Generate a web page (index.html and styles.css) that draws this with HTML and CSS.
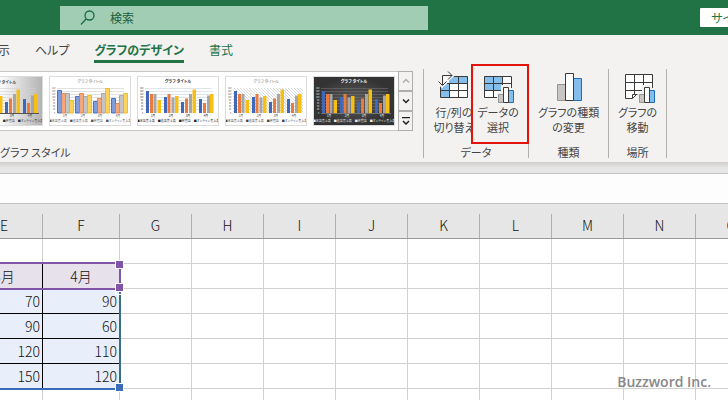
FILE: index.html
```
<!DOCTYPE html>
<html lang="ja">
<head>
  <meta charset="utf-8">
  <title>グラフのデザイン</title>
  <meta name="viewport" content="width=device-width, initial-scale=1.0">
  <link rel="stylesheet" href="styles.css">
</head>
<body>
<svg class="defs" aria-hidden="true">
  <defs>
    <linearGradient id="silver" x1="0" y1="0" x2="1" y2="0">
      <stop offset="0.5" stop-color="#fafafa"/>
      <stop offset="1" stop-color="#b4b4b4"/>
    </linearGradient>
    <radialGradient id="dark">
      <stop offset="0" stop-color="#5c5c5c"/>
      <stop offset="1" stop-color="#333333"/>
    </radialGradient>
    <pattern id="hatch" width="3" height="3" patternUnits="userSpaceOnUse">
      <path d="M0 0l3 3" stroke="#b9c0c0" stroke-width="0.6"/>
    </pattern>
    <symbol id="lines" viewBox="0 0 80 48">
      <path d="M7 11.5h67M7 14.5h67M7 17.5h67M7 20.5h67M7 23.5h67M7 26.5h67M7 29.5h67M7 32.5h67" stroke="currentColor" stroke-width="0.6"/>
    </symbol>
    <symbol id="bars" viewBox="0 0 80 48">
      <path fill="#4167b8" d="M8 14h3v22h-3zM26 20h3v16h-3zM43 25h3v11h-3zM61 22h3v14h-3z"/>
      <path fill="#e97c3c" d="M12 17h3v19h-3zM29.5 17h3v19h-3zM47 21.500h3v14.500h-3zM65 26h3v10h-3z"/>
      <path fill="#a6a6a6" d="M15.500 17h3v19h-3zM33.500 20.500h3v15.500h-3zM51 17h3v19h-3zM69 18.500h3v17.500h-3z"/>
      <path fill="#f8be14" d="M19.500 23h3.500v13h-3.500zM37 19h3.500v17h-3.500zM54.500 12.500h3.500v23.500h-3.500zM72 17h3.500v19h-3.500z"/>
    </symbol>
    <symbol id="texts" viewBox="0 0 80 48">
      <g fill="currentColor" font-size="2">
        <text x="2" y="12">160</text><text x="2" y="15">140</text><text x="2" y="18">120</text><text x="2" y="21">100</text>
        <text x="3" y="24">80</text><text x="3" y="27">60</text><text x="3" y="30">40</text><text x="3" y="33">20</text><text x="4" y="37">0</text>
      </g>
      <g fill="currentColor" font-size="3" text-anchor="middle">
        <text x="15" y="40">1月</text><text x="33" y="40">2月</text><text x="50" y="40">3月</text><text x="68" y="40">4月</text>
        <text x="40" y="45">■本店売上高　■支店売上高　■直営店　■オンライン売上高</text>
      </g>
    </symbol>
  </defs>
</svg>

<header class="titlebar">
  <label class="search">
    <svg width="16" height="16" viewBox="0 0 16 16" fill="none" stroke="#1b6b40" stroke-width="1.3"><circle cx="9.500" cy="5.500" r="4.500"/><path d="M6.300 8.700L1 14.500"/></svg>
    <input type="text" placeholder="検索" aria-label="検索">
  </label>
  <button class="signin">サインイン</button>
</header>

<nav class="tabs">
  <a href="#">表示</a>
  <a href="#">ヘルプ</a>
  <a href="#" class="active">グラフのデザイン</a>
  <a href="#" class="context">書式</a>
</nav>

<section class="ribbon">
  <div class="group styles">
    <div class="gallery">
      <div class="thumbs">
        <button class="thumb" aria-label="スタイル 1">
          <svg viewBox="0 0 80 48"><rect width="80" height="48" fill="url(#silver)"/>
            <use href="#lines" color="#d0d0d0"/><use href="#bars"/><path d="M7 36.500h70" stroke="#555"/><use href="#texts" color="#333"/>
            <text class="caption" x="41" y="7" fill="#444">グラフ タイトル</text></svg>
        </button>
        <button class="thumb" aria-label="スタイル 2">
          <svg viewBox="0 0 80 48"><rect width="80" height="48" fill="#fff"/>
            <use href="#lines" color="#cccccc"/>
            <g stroke-width="0.8">
              <path fill="#7d9edb" stroke="#2f5cb8" d="M7.500 13.500h4v22.500h-4zM25.500 19.500h4v16.500h-4zM43.500 24.500h4v11.500h-4zM61.500 21.500h4v14.500h-4z"/>
              <path fill="#f5a67b" stroke="#e5733b" d="M11.500 16.500h4v19.500h-4zM29.500 16.500h4v19.500h-4zM47.500 21.500h4v14.500h-4zM65.500 26.500h4v9.500h-4z"/>
              <path fill="#c4c4c4" stroke="#999" d="M15.500 16.500h4v19.500h-4zM33.500 19.500h4v16.500h-4zM51.500 16.500h4v19.500h-4zM69.500 18.500h4v17.500h-4z"/>
              <path fill="#fbd35b" stroke="#e8b410" d="M19.500 23.500h4v12.500h-4zM37.500 18.500h4v17.500h-4zM55.500 11.500h4v24.500h-4zM73.500 16.500h4v19.500h-4z"/>
            </g>
            <use href="#texts" color="#555"/>
            <text class="caption light" x="40" y="6" fill="#777">グラフ タイトル</text></svg>
        </button>
        <button class="thumb" aria-label="スタイル 3">
          <svg viewBox="0 0 80 48"><rect width="80" height="48" fill="#fff"/>
            <use href="#lines" color="#c9d3df"/><use href="#bars"/><use href="#texts" color="#222"/>
            <text class="caption" x="40" y="6" fill="#333">グラフ タイトル</text></svg>
        </button>
        <button class="thumb" aria-label="スタイル 4">
          <svg viewBox="0 0 80 48"><rect width="80" height="48" fill="#fff"/>
            <rect x="7" y="11" width="70" height="25" fill="url(#hatch)"/>
            <path d="M24.500 11v25M42 11v25M59.500 11v25" stroke="#ddd" stroke-width="0.6"/>
            <use href="#bars"/><use href="#texts" color="#444"/>
            <text class="caption light" x="40" y="6" fill="#777">グラフ タイトル</text></svg>
        </button>
        <button class="thumb" aria-label="スタイル 5">
          <svg viewBox="0 0 80 48"><rect width="80" height="48" fill="url(#dark)"/>
            <use href="#lines" color="#707070"/><use href="#bars"/><path d="M7 36.500h70" stroke="#999" stroke-width="0.6"/><use href="#texts" color="#eee"/>
            <text class="caption" x="40" y="6" fill="#fff">グラフ タイトル</text></svg>
        </button>
      </div>
      <div class="scroll">
        <button aria-label="上へ" disabled><svg width="8" height="8" viewBox="0 0 8 8"><path d="M1 5.500l3-3 3 3"/></svg></button>
        <button aria-label="下へ"><svg width="8" height="8" viewBox="0 0 8 8"><path d="M1 2.500l3 3 3-3"/></svg></button>
        <button aria-label="その他"><svg width="8" height="8" viewBox="0 0 8 8"><path d="M0 0.500h8M1 4l3 3 3-3"/></svg></button>
      </div>
    </div>
    <div class="group-name">グラフ スタイル</div>
  </div>

  <div class="group data">
    <div class="tools">
      <button class="tool">
        <svg class="icon" viewBox="0 0 32 32">
          <path fill="#fff" d="M2 5h28v21h-28z"/>
          <path fill="#83beec" d="M11 5h19v7h-19zM2 12h9v14h-9z"/>
          <path class="line" d="M2.500 12v14.500h27v-21H14M11.500 12v14M20.500 5v21M2 12.500h28M2 19.500h28"/>
          <path d="M4 14V4.500h10M1 11l3 3.500L8 11M10 1l4 3.500L10 8" fill="none" stroke="#f3f2f1" stroke-width="4"/>
          <path class="line" d="M4.500 14V4.500H14M0.500 10.500l4 4 4-4M10 0.500l4 4-4 4"/>
        </svg>
        <span>行/列の<br>切り替え</span>
      </button>
      <button class="tool marked">
        <svg class="icon" viewBox="0 0 32 32">
          <path fill="#fff" d="M2 5h28v21h-28z"/>
          <path fill="#83beec" d="M2 5h18v14h-18z"/>
          <path class="line" d="M2.500 5.500h27v21h-27zM11.500 5v21M20.500 5v21M2 12.500h28M2 19.500h28"/>
          <path fill="#f3f2f1" d="M15 21h4v-7h9v3h5v15h-18z"/>
          <path fill="#c8c6c4" stroke="#979593" d="M16.500 23.500h5v8h-5z"/>
          <path fill="#83beec" stroke="#1e6fb8" d="M26.500 19.500h5v12h-5z"/>
          <path fill="#fff" stroke="#3b3a39" d="M21.500 16.500h5v15h-5z"/>
        </svg>
        <span>データの<br>選択</span>
      </button>
    </div>
    <div class="group-name">データ</div>
  </div>

  <div class="group kind">
    <div class="tools">
      <button class="tool">
        <svg class="icon" viewBox="0 0 32 32">
          <path fill="#c8c6c4" stroke="#979593" d="M4.500 13.500h8v16h-8z"/>
          <path fill="#83beec" stroke="#1e6fb8" d="M20.500 7.500h8v22h-8z"/>
          <path fill="#fff" stroke="#3b3a39" d="M12.500 2.500h8v27h-8z"/>
        </svg>
        <span>グラフの種類<br>の変更</span>
      </button>
    </div>
    <div class="group-name">種類</div>
  </div>

  <div class="group place">
    <div class="tools">
      <button class="tool">
        <svg class="icon" viewBox="0 0 32 32">
          <path fill="#fff" d="M3 3h28v20h-16l-4 4h-8z"/>
          <path class="line" d="M30.500 17V3.500h-27v24h7l4-4M12.500 3v20M21.500 3v12M3 11.500h28M3 19.500h18M10.500 27v-3.500h5"/>
          <path fill="#f3f2f1" d="M16 21h4v-7h9v3h4v15h-17z"/>
          <path fill="#c8c6c4" stroke="#979593" d="M17.500 23.500h5v8h-5z"/>
          <path fill="#83beec" stroke="#1e6fb8" d="M27.500 19.500h5v12h-5z"/>
          <path fill="#fff" stroke="#3b3a39" d="M22.500 16.500h5v15h-5z"/>
        </svg>
        <span>グラフの<br>移動</span>
      </button>
    </div>
    <div class="group-name">場所</div>
  </div>
</section>

<div class="formula"><input type="text" aria-label="数式バー"></div>

<main class="sheet">
  <table>
    <colgroup><col class="wide" span="2"><col span="9"></colgroup>
    <thead>
      <tr><th><span>E</span></th><th><span>F</span></th><th><span>G</span></th><th><span>H</span></th><th><span>I</span></th><th><span>J</span></th><th><span>K</span></th><th><span>L</span></th><th><span>M</span></th><th><span>N</span></th><th><span>O</span></th></tr>
    </thead>
    <tbody>
      <tr><td></td><td></td><td></td><td></td><td></td><td></td><td></td><td></td><td></td><td></td><td></td></tr>
      <tr class="months"><td>3月</td><td>4月</td><td></td><td></td><td></td><td></td><td></td><td></td><td></td><td></td><td></td></tr>
      <tr class="values"><td>70</td><td>90</td><td></td><td></td><td></td><td></td><td></td><td></td><td></td><td></td><td></td></tr>
      <tr class="values"><td>90</td><td>60</td><td></td><td></td><td></td><td></td><td></td><td></td><td></td><td></td><td></td></tr>
      <tr class="values"><td>120</td><td>110</td><td></td><td></td><td></td><td></td><td></td><td></td><td></td><td></td><td></td></tr>
      <tr class="values"><td>150</td><td>120</td><td></td><td></td><td></td><td></td><td></td><td></td><td></td><td></td><td></td></tr>
      <tr><td></td><td></td><td></td><td></td><td></td><td></td><td></td><td></td><td></td><td></td><td></td></tr>
    </tbody>
  </table>
  <div class="range range-values"></div>
  <div class="range range-months"></div>
  <div class="credit">Buzzword Inc.</div>
</main>
</body>
</html>
```
FILE: styles.css
```
* {
  box-sizing: border-box;
}

body {
  margin: 0;
  height: 100vh;
  display: flex;
  flex-direction: column;
  overflow: hidden;
  background: #fff;
  color: #444;
  font-family: "Noto Sans CJK JP", sans-serif;
  font-size: 12px;
  font-feature-settings: "palt";
}

button,
input {
  font: inherit;
  font-feature-settings: inherit;
  color: inherit;
  padding: 0;
  border: 0;
  background: none;
}

.defs {
  position: absolute;
  width: 0;
  height: 0;
}

/* title bar */
.titlebar {
  flex: none;
  display: flex;
  justify-content: space-between;
  align-items: center;
  height: 35px;
  padding-left: 60px;
  background: #217346;
}

.search {
  display: flex;
  align-items: center;
  gap: 14px;
  width: 368px;
  height: 24px;
  padding-left: 20px;
  background: #a0cdb4;
}

.search input {
  flex: 1;
  min-width: 0;
}

.search input::placeholder {
  color: #1b5e3a;
  opacity: 1;
}

.signin {
  flex: none;
  height: 19px;
  padding: 0 11px;
  margin-right: -48px;
  border-radius: 1px;
  background: #fff;
  color: #217346;
  white-space: nowrap;
}

/* tabs */
.tabs {
  flex: none;
  display: flex;
  gap: 25px;
  height: 31px;
  padding-top: 4px;
  margin-left: -14px;
  background: #f3f2f1;
  line-height: 22px;
}

.tabs a {
  height: 24px;
  color: #444;
  text-decoration: none;
  white-space: nowrap;
}

.tabs .active {
  color: #217346;
  font-weight: bold;
  border-bottom: 3px solid #217346;
}

.tabs .context {
  color: #217346;
}

/* ribbon */
.ribbon {
  flex: none;
  display: flex;
  height: 96px;
  padding: 3px 0 4px;
  background: #f3f2f1;
  font-size: 11px;
}

.group {
  flex: none;
  display: flex;
  flex-direction: column;
  justify-content: space-between;
  border-right: 1px solid #b3b0ad;
}

.styles {
  width: 424px;
  padding-top: 2px;
}

.data {
  width: 105px;
}

.kind {
  width: 80px;
}

.place {
  width: 58px;
}

.group-name {
  height: 15px;
  line-height: 15px;
  text-align: center;
  margin-bottom: -2px;
}

.styles .group-name {
  text-align: left;
}

.gallery {
  display: flex;
  justify-content: flex-end;
  margin-right: 10px;
}

.thumbs {
  display: flex;
  align-items: center;
  gap: 8px;
  padding: 0 4px;
  border: solid #c8c6c4;
  border-width: 1px 0;
  background: #fff;
}

.thumb {
  width: 80px;
  height: 48px;
  outline: 1px solid #dcdcdc;
}

.thumb svg {
  display: block;
}

.caption {
  font-size: 4px;
  font-weight: bold;
  text-anchor: middle;
}

.caption.light {
  font-weight: normal;
}

.scroll {
  display: flex;
  flex-direction: column;
}

.scroll button {
  display: flex;
  align-items: center;
  justify-content: center;
  width: 15px;
  height: 20px;
  border: 1px solid #b0aeac;
}

.scroll svg {
  fill: none;
  stroke: #222;
  stroke-width: 1.5;
}

.scroll button:disabled svg {
  stroke: #b0aeac;
}

.tools {
  display: flex;
  justify-content: center;
}

.tool {
  position: relative;
  display: flex;
  flex-direction: column;
  align-items: center;
  gap: 2px;
  width: 44px;
  padding-top: 2px;
  line-height: 15px;
  white-space: nowrap;
}

.icon {
  width: 32px;
  height: 32px;
  overflow: visible;
}

.icon .line {
  fill: none;
  stroke: #3b3a39;
}

.marked > * {
  position: relative;
}

.marked::before {
  content: "";
  position: absolute;
  top: -5px;
  left: -5px;
  right: -9px;
  bottom: -9px;
  border: 2px solid #e3120b;
  background: #f3f2f1;
}

/* formula bar */
.formula {
  flex: none;
  padding-top: 11px;
  background: linear-gradient(#cfcecd, #e6e6e6 6px);
}

.formula input {
  display: block;
  width: 100%;
  height: 31px;
  border: solid #c3c3c3;
  border-width: 1px 0;
  background: #fdfdfd;
}

/* sheet */
.sheet {
  position: relative;
  flex: 1;
  min-height: 0;
  overflow: hidden;
  font-size: 14px;
  font-weight: 300;
  color: #111;
}

table {
  width: 802px;
  margin-left: -34px;
  table-layout: fixed;
  border-collapse: separate;
  border-spacing: 0;
}

col {
  width: 72px;
}

col.wide {
  width: 77px;
}

th {
  height: 35px;
  padding: 10px 0 0;
  border-bottom: 1px solid #999;
  background: #e6e6e6;
  font-weight: inherit;
}

th span {
  display: block;
  height: 24px;
  line-height: 23px;
  border-right: 1px solid #b0b0b0;
}

td {
  height: 25px;
  padding: 0 2px;
  border: solid #d0d0d0;
  border-width: 0 1px 1px 0;
  line-height: 22px;
}

.months td:nth-child(-n+2) {
  background: #e6e1ea;
  border-color: #000;
  text-align: center;
}

.values td:nth-child(-n+2) {
  background: #e8effa;
  border-color: #000;
  text-align: right;
}

.range {
  position: absolute;
  left: -34px;
  width: 155px;
}

/* the drag handle on the corner of a range */
.range::before,
.range::after {
  content: "";
  position: absolute;
  right: -5px;
  width: 7px;
  height: 7px;
  border: 1px solid #fff;
}

.range::before {
  top: -4px;
}

.range::after {
  bottom: -4px;
}

.range-months {
  top: 58px;
  height: 28px;
  border: 2px solid #8054a8;
}

.range-months::before,
.range-months::after {
  background: #8054a8;
}

.range-values {
  top: 84px;
  height: 102px;
  border: 2px solid #3a6cb8;
  border-right-color: #3a6e85;
}

.range-values::after {
  background: #3a6cb8;
}

.credit {
  position: absolute;
  right: 17px;
  bottom: 8px;
  font-family: "Open Sans", sans-serif;
  font-weight: 600;
  line-height: 20px;
  color: #888;
}
```
